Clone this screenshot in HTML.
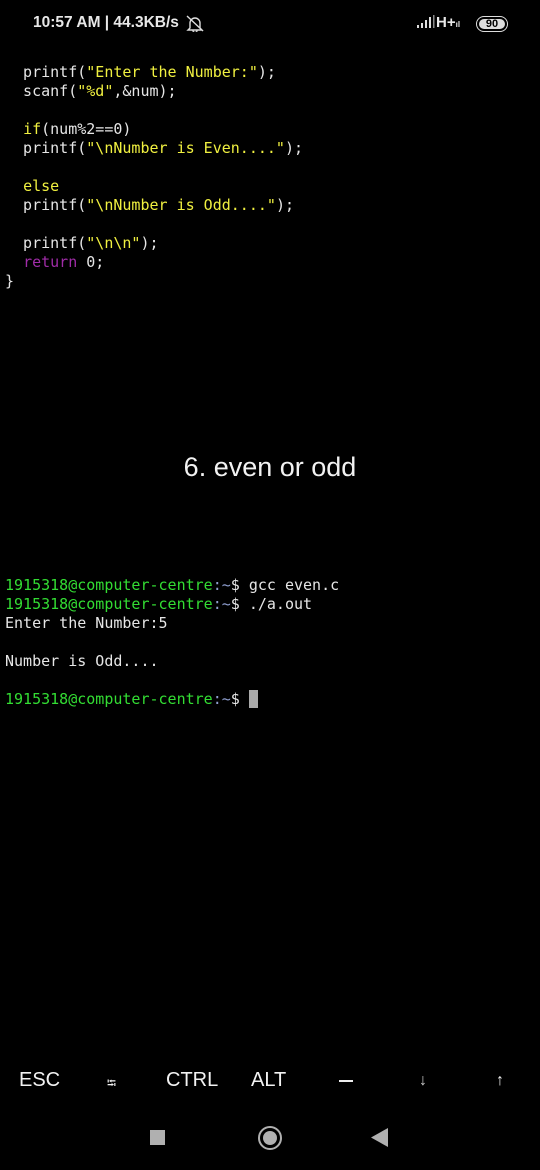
<!DOCTYPE html>
<html><head><meta charset="utf-8"><style>
html,body{margin:0;padding:0;background:#000;width:540px;height:1170px;overflow:hidden;position:relative}
.sb{position:absolute;top:14px;left:33px;font:bold 15.5px "Liberation Sans",sans-serif;color:#e8e8e8}
.mono{position:absolute;left:5px;font:15px/19px "DejaVu Sans Mono","Liberation Mono",monospace;color:#e6e6e6;white-space:pre;margin:0}
.y{color:#f0f040}
.p{color:#a02ca8}
.g{color:#33dd33}
.b{color:#8f9fd0}
.title{position:absolute;top:452px;left:0;width:540px;text-align:center;font:27px "Liberation Sans",sans-serif;color:#f2f2f2}
.k{position:absolute;top:1069px;font:20px "Liberation Sans",sans-serif;color:#f2f2f2}
</style></head><body>
<div class="sb">10:57 AM | 44.3KB/s</div>
<svg style="position:absolute;left:186px;top:15px" width="18" height="17" fill="none" stroke="#ddd" stroke-width="1.4"><path d="M4 13 V8 a5 5 0 0 1 10 0 V13 L16 15 H2 Z M7 15.5 a2 2 0 0 0 4 0 M1 1 L17 16"/></svg>
<div style="position:absolute;top:14px;left:416px;font:bold 15px 'Liberation Sans',sans-serif;color:#e8e8e8">
<svg width="20" height="14" style="vertical-align:-2px"><rect x="1" y="10" width="2" height="3" fill="#ddd"/><rect x="5" y="8" width="2" height="5" fill="#ddd"/><rect x="9" y="5" width="2" height="8" fill="#ddd"/><rect x="13" y="2" width="2" height="11" fill="#ddd"/><rect x="17" y="0" width="1.5" height="13" fill="#888"/></svg>H+<span style="font-size:8px">ıl</span></div>
<div style="position:absolute;top:16px;left:476px;width:30px;height:14px;border:1.5px solid #ddd;border-radius:8px;font:bold 11px/14px 'Liberation Sans',sans-serif;color:#000;text-align:center"><div style="position:absolute;left:2px;top:2px;width:26px;height:10px;background:#ddd;border-radius:5px"></div><span style="position:relative">90</span></div>
<pre class="mono" style="top:63px">  printf(<span class="y">"Enter the Number:"</span>);
  scanf(<span class="y">"%d"</span>,&amp;num);

  <span class="y">if</span>(num%2==0)
  printf(<span class="y">"\nNumber is Even...."</span>);

  <span class="y">else</span>
  printf(<span class="y">"\nNumber is Odd...."</span>);

  printf(<span class="y">"\n\n"</span>);
  <span class="p">return</span> 0;
}</pre>
<div class="title">6. even or odd</div>
<pre class="mono" style="top:576px"><span class="g">1915318@computer-centre</span><span class="b">:~</span>$ gcc even.c
<span class="g">1915318@computer-centre</span><span class="b">:~</span>$ ./a.out
Enter the Number:5

Number is Odd....

<span class="g">1915318@computer-centre</span><span class="b">:~</span>$ <span style="background:#aaa">&nbsp;</span></pre>
<div class="k" style="left:19px">ESC</div>
<div class="k" style="left:107px;font-size:12px;top:1074px">⭾</div>
<div class="k" style="left:166px">CTRL</div>
<div class="k" style="left:251px">ALT</div>
<div style="position:absolute;left:339px;top:1080px;width:14px;height:2px;background:#eee"></div>
<div class="k" style="left:419px;font-size:16px;top:1072px;color:#ccc">↓</div>
<div class="k" style="left:496px;font-size:16px;top:1072px">↑</div>
<div style="position:absolute;left:150px;top:1130px;width:15px;height:15px;background:#b0b0b0"></div>
<div style="position:absolute;left:258px;top:1126px;width:20px;height:20px;border:2px solid #b0b0b0;border-radius:50%"></div>
<div style="position:absolute;left:263px;top:1131px;width:14px;height:14px;background:#b0b0b0;border-radius:50%"></div>
<svg style="position:absolute;left:371px;top:1128px" width="18" height="19"><polygon points="17,0 17,19 0,9.5" fill="#b0b0b0"/></svg>
</body></html>
